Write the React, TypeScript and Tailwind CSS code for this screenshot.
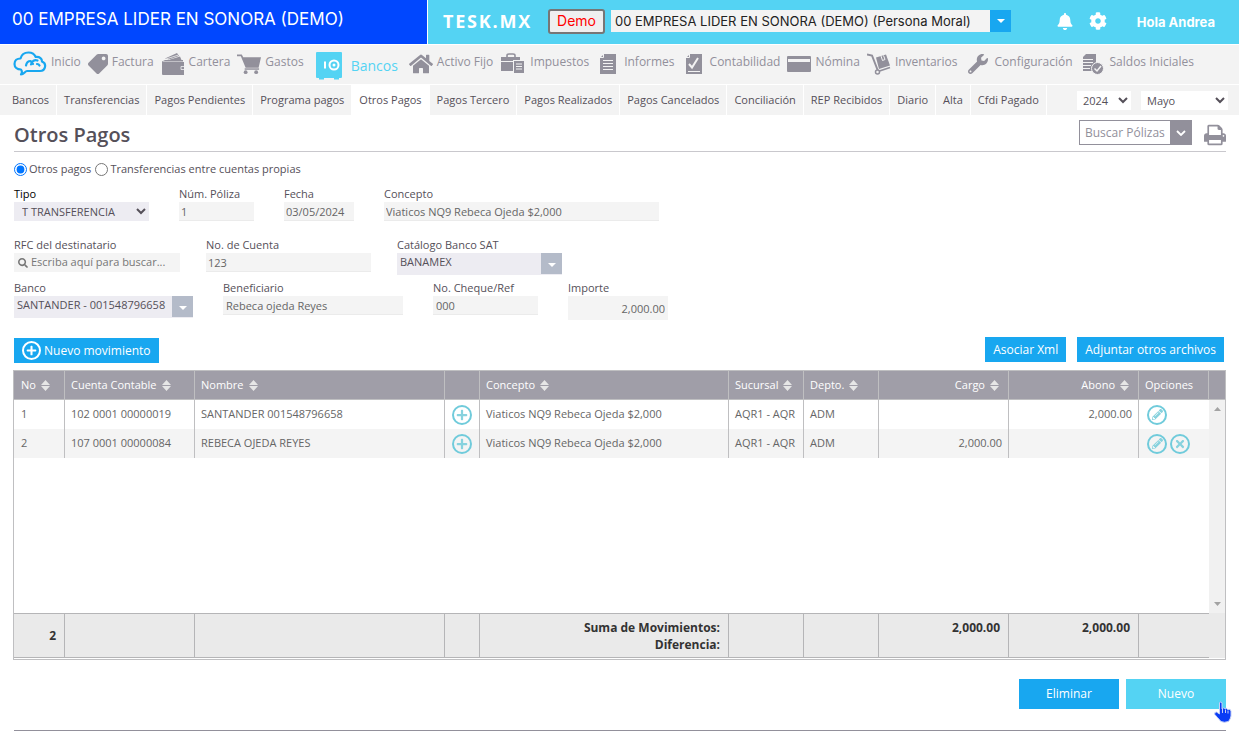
import { ReactNode, useState } from 'react';
import { FaBell, FaCog, FaHome, FaPencilAlt, FaPlus, FaSearch, FaTag, FaTimes, FaWrench } from 'react-icons/fa';

type IconProps = { className?: string };

function CloudIcon() {
  return (
    <svg width="34" height="26" viewBox="0 0 34 26" fill="none" stroke="#18a7f0" strokeWidth="2.2" strokeLinecap="round" strokeLinejoin="round">
      <path d="M8 18.500C4 18.500 1.500 16 1.500 13C1.500 9.500 4 7.500 7.500 7.500C8.500 3.500 12 1.500 15.500 1.500C19 1.500 21.500 3 22.700 6C27 5.500 29 8 29 10.500C31.500 11.500 32.500 13.500 32 16C31.500 18.500 29.500 20 27 20H14C12 20 11 23.500 8 23.500C9.500 21.500 9 20 8 18.500Z" />
      <path d="M13 14.500C13.500 12 15 10 17.500 10L20 13M18 13.500C19 10 21.500 8.500 24.500 9.500M24 13C25.500 13 26 13.500 26.500 14.500" />
    </svg>
  );
}

function WalletIcon() {
  return (
    <svg width="24" height="24" viewBox="0 0 24 24" fill="#92909b">
      <path d="M4 6.500L16 1L18 4L8 7.500ZM9 7.500L19 4.500L20.500 8H9Z" />
      <path d="M1 9.500L4 8H22V9.500H2V10H23V23H2Q1 23 1 22Z" />
      <path d="M5 7L17 3.200" stroke="#f3f3f3" strokeWidth="0.8" />
      <path d="M24 14.500H20V17.500H24" fill="none" stroke="#f3f3f3" strokeWidth="0.8" />
    </svg>
  );
}

function CartIcon() {
  return (
    <svg width="25" height="24" viewBox="0 0 25 24" fill="#92909b">
      <path d="M0 2h5l1.500 3H25l-2.500 11H9L4 4H0z" />
      <path d="M8 16.500h15V18H8z" />
      <circle cx="9" cy="20.500" r="2" />
      <circle cx="20" cy="20.500" r="2" />
    </svg>
  );
}

function SafeIcon() {
  return (
    <svg width="26" height="28" viewBox="0 0 26 28">
      <path d="M1 0H25Q26 0 26 1V25Q26 26 25 26H23V27.500H18V26H8V27.500H3V26H1Q0 26 0 25V1Q0 0 1 0Z" fill="#54d3f3" />
      <path d="M9 9.500V16.500" stroke="#fff" strokeWidth="2" />
      <circle cx="18" cy="13" r="4.500" fill="none" stroke="#fff" strokeWidth="2" />
      <circle cx="18" cy="13" r="1.500" fill="#fff" />
    </svg>
  );
}

function BriefcaseIcon() {
  return (
    <svg width="24" height="22" viewBox="0 0 24 22" fill="#92909b">
      <path d="M6 4V2.500Q6 1 8 1H12Q14 1 14 2.500V4" fill="none" stroke="#92909b" strokeWidth="1.600" />
      <path d="M0 4H19V7H12V18H0Z" />
      <path d="M0 8.500H12" stroke="#f3f3f3" />
      <path d="M13 8H23V20H13Z" />
      <path d="M15 11H21M15 13.500H21M15 16H21" stroke="#f3f3f3" />
    </svg>
  );
}

function ReportIcon() {
  return (
    <svg width="18" height="22" viewBox="0 0 18 22">
      <path d="M5 1H17V21H1V5Z" fill="#92909b" />
      <path d="M1 4.500H4.500V1" fill="none" stroke="#f3f3f3" />
      <path d="M4 7.500H14M4 10.500H14M4 13.500H14M4 16.500H14" stroke="#f3f3f3" strokeWidth="1.200" />
    </svg>
  );
}

function CheckReportIcon() {
  return (
    <svg width="18" height="22" viewBox="0 0 18 22">
      <path d="M5 1H17V21H1V5Z" fill="#92909b" />
      <path d="M1 4.500H4.500V1" fill="none" stroke="#f3f3f3" />
      <path d="M4 11L7 14.500L13 5" fill="none" stroke="#f3f3f3" strokeWidth="2" />
      <path d="M3 18.500H15" stroke="#f3f3f3" />
    </svg>
  );
}

function CardIcon() {
  return (
    <svg width="24" height="16" viewBox="0 0 24 16">
      <rect width="24" height="16" rx="1" fill="#92909b" />
      <path d="M1 4.500H23" stroke="#f3f3f3" strokeWidth="3" />
    </svg>
  );
}

function TrolleyIcon() {
  return (
    <svg width="24" height="22" viewBox="0 0 24 22">
      <path d="M0 1.500L5 2.500L11 18" fill="none" stroke="#92909b" strokeWidth="2" />
      <path d="M9 4.500L19 1.500L23 12.500L12 16Z" fill="#92909b" />
      <path d="M14 3L15.500 7.500L18 6.500L16.500 2.500" fill="none" stroke="#f3f3f3" />
      <path d="M11 18.500L23 14.500" stroke="#92909b" strokeWidth="1.800" />
      <circle cx="10.500" cy="19" r="2" fill="#f3f3f3" stroke="#92909b" strokeWidth="1.500" />
    </svg>
  );
}

function BalanceIcon() {
  return (
    <svg width="22" height="22" viewBox="0 0 22 22">
      <path d="M4 1H14V18H1V4Z" fill="#92909b" />
      <path d="M1 6.500H11M1 9.500H11M1 12.500H9M1 15.500H8" stroke="#f3f3f3" />
      <circle cx="15.500" cy="15.500" r="6" fill="#92909b" stroke="#f3f3f3" />
      <path d="M12.500 15.500L15 18L19 13" fill="none" stroke="#f3f3f3" strokeWidth="1.500" />
    </svg>
  );
}

function PrintIcon() {
  return (
    <svg width="22" height="22" viewBox="64 64 1664 1664" fill="#92909b">
      <path d="M448 1536h896v-256h-896v256zm0-640h896v-384h-160q-40 0-68-28t-28-68v-160h-640v640zm1152 64q0-26-19-45t-45-19-45 19-19 45 19 45 45 19 45-19 19-45zm128 0v416q0 13-9.500 22.500t-22.500 9.500h-224v160q0 40-28 68t-68 28h-960q-40 0-68-28t-28-68v-160h-224q-13 0-22.500-9.500t-9.500-22.500v-416q0-79 56.500-135.500t135.500-56.500h64v-544q0-40 28-68t68-28h672q40 0 88 20t76 48l152 152q28 28 48 76t20 88v256h64q79 0 135.500 56.500t56.500 135.500z" />
    </svg>
  );
}

function HandCursor({ className }: IconProps) {
  return (
    <svg className={className} width="18" height="22" viewBox="0 0 18 22">
      <path
        d="M5.500 1.500Q7.500 0 8 2V8Q9 6 11 7.500Q12.500 6.500 13.500 8.500Q16.500 7.500 17 10V15Q16.500 18 14.500 20.500Q10 22 7 20.500Q3 16 .8 13.500Q0 11 2.500 11L5.500 13Z"
        fill="#0a3cf5"
        stroke="#c5cff5"
      />
      <path d="M8.500 8V12M11.500 8.500V12M14 9.500V12.500" stroke="#c5cff5" />
    </svg>
  );
}

function SortIcon() {
  return (
    <svg className="ml-[5px] inline-block align-middle" width="9" height="11" viewBox="0 0 9 11" fill="#e6e6e6">
      <path d="M4.500 0L9 5H0ZM0 6H9L4.500 11Z" />
    </svg>
  );
}

function DownArrow() {
  return (
    <svg width="8" height="4" viewBox="0 0 8 4" fill="#fff">
      <path d="M0 0H8L4 4Z" />
    </svg>
  );
}

const menu = [
  { label: 'Inicio', icon: <CloudIcon />, box: 'w-[34px]' },
  { label: 'Factura', icon: <FaTag className="size-5 -scale-x-100" />, box: 'w-5' },
  { label: 'Cartera', icon: <WalletIcon />, box: 'w-6' },
  { label: 'Gastos', icon: <CartIcon />, box: 'w-6' },
  { label: 'Bancos', icon: <SafeIcon />, box: 'w-9', active: true },
  { label: 'Activo Fijo', icon: <FaHome className="ml-1 size-6" />, box: 'w-7' },
  { label: 'Impuestos', icon: <BriefcaseIcon />, box: 'w-[26px]' },
  { label: 'Informes', icon: <ReportIcon />, box: 'w-6' },
  { label: 'Contabilidad', icon: <CheckReportIcon />, box: 'w-6' },
  { label: 'Nómina', icon: <CardIcon />, box: 'w-6' },
  { label: 'Inventarios', icon: <TrolleyIcon />, box: 'w-6' },
  { label: 'Configuración', icon: <FaWrench className="size-5" />, box: 'w-[26px]' },
  { label: 'Saldos Iniciales', icon: <BalanceIcon />, box: 'w-[26px]' },
];

const tabs = [
  'Bancos',
  'Transferencias',
  'Pagos Pendientes',
  'Programa pagos',
  'Otros Pagos',
  'Pagos Tercero',
  'Pagos Realizados',
  'Pagos Cancelados',
  'Conciliación',
  'REP Recibidos',
  'Diario',
  'Alta',
  'Cfdi Pagado',
];

const movements = [
  { no: 1, account: '102 0001 00000019', name: 'SANTANDER 001548796658', cargo: '', abono: '2,000.00', removable: false },
  { no: 2, account: '107 0001 00000084', name: 'REBECA OJEDA REYES', cargo: '2,000.00', abono: '', removable: true },
];

function Field({ id, label, width, dark, children }: { id: string; label: string; width: string; dark?: boolean; children: ReactNode }) {
  return (
    <div className={`flex flex-col ${width}`}>
      <label htmlFor={id} className={dark ? 'leading-4 text-black' : 'leading-4'}>
        {label}
      </label>
      {children}
    </div>
  );
}

function TextField({ id, value, pad = 'px-0.5' }: { id: string; value: string; pad?: string }) {
  return <input id={id} defaultValue={value} className={`h-[19px] w-full border-b border-[#ebebeb] bg-[#f4f4f4] text-[#666] outline-none ${pad}`} />;
}

function Combo({ id, value }: { id: string; value: string }) {
  return (
    <div className="flex h-[22px] bg-[#edecf2]">
      <select id={id} className="h-[19px] min-w-0 flex-1 appearance-none px-[3px] outline-none">
        <option>{value}</option>
      </select>
      <span className="flex h-[21px] w-[21px] items-center justify-center bg-[#b4bbc9] pt-0.5">
        <DownArrow />
      </span>
    </div>
  );
}

function RoundButton({ label, children }: { label: string; children: ReactNode }) {
  return (
    <button aria-label={label} className="flex size-5 items-center justify-center rounded-full border-2 border-[#70cbdb] text-[#87d2de]">
      {children}
    </button>
  );
}

export default function App() {
  const [kind, setKind] = useState('otros');

  return (
    <div className="min-h-screen bg-white font-['Open_Sans',sans-serif] text-[11px] text-[#555059]">
      <header className="flex h-[45px] gap-px border-b border-white font-['Inter',sans-serif]">
        <div className="w-[427px] shrink-0 bg-[#0047ff] pl-3 text-[17px] leading-[39px] text-white">00 EMPRESA LIDER EN SONORA (DEMO)</div>
        <div className="flex flex-1 items-center bg-[#54d3f3] pr-6 pb-0.5 pl-[15px]">
          <span className="w-[105px] font-['Open_Sans',sans-serif] text-[18px] font-bold tracking-widest text-white">TESK.MX</span>
          <button className="h-[25px] w-[57px] rounded-[3px] border-2 border-[#767676] bg-[#efefef] text-[14px] leading-5 text-[#ff0000]">Demo</button>
          <div className="ml-1.5 flex h-[22px] w-[400px] bg-[#f3f3f3] text-black">
            <select aria-label="Empresa" className="min-w-0 flex-1 appearance-none px-1 pt-0.5 text-[13px] text-[#222] outline-none">
              <option>00 EMPRESA LIDER EN SONORA (DEMO) (Persona Moral)</option>
            </select>
            <span className="flex w-[21px] items-center justify-center bg-[#18a7f0]">
              <DownArrow />
            </span>
          </div>
          <div className="ml-auto flex items-center gap-4 text-white">
            <button aria-label="Notificaciones">
              <FaBell className="h-[17px] w-4" />
            </button>
            <button aria-label="Ajustes">
              <FaCog className="size-[18px]" />
            </button>
            <span className="pt-1 pl-3.5 text-[13px] font-bold">Hola Andrea</span>
          </div>
        </div>
      </header>

      <nav className="flex h-10 gap-[7px] border-b border-white bg-[#f3f3f3] pl-[13px] text-[12px] font-medium text-[#92909b]">
        {menu.map((item) => (
          <a
            key={item.label}
            href="#"
            className={item.active ? 'flex items-center gap-1 pt-0.5 text-[14px] whitespace-nowrap text-[#54d3f3]' : 'flex items-center gap-1 pb-0.5 whitespace-nowrap'}
          >
            <span className={`flex shrink-0 justify-center ${item.box}`}>{item.icon}</span>
            <span className={item.active ? '' : 'pb-1'}>{item.label}</span>
          </a>
        ))}
      </nav>

      <div className="flex h-[30px] items-center bg-[#f3f3f3] pl-[5px] font-medium">
        {tabs.map((tab) => (
          <a
            key={tab}
            href="#"
            className={`flex h-full items-center border-r border-white px-[7px] whitespace-nowrap ${tab === 'Otros Pagos' ? 'bg-white' : ''}`}
          >
            {tab}
          </a>
        ))}
        <div className="mr-[11px] ml-auto flex gap-2.5 font-normal">
          <select aria-label="Año" className="h-[19px] w-[54px] bg-white pl-0.5 outline-none">
            <option>2024</option>
          </select>
          <select aria-label="Mes" className="h-[19px] w-[87px] bg-white pl-0.5 outline-none">
            <option>Mayo</option>
          </select>
        </div>
      </div>

      <main className="px-[13px]">
        <div className="ml-px flex h-[37px] items-start justify-between border-b border-[#c9c8cd]">
          <h1 className="pt-1 text-[20px] leading-8 font-semibold">Otros Pagos</h1>
          <div className="flex gap-3 pt-[5px] text-[#92909b]">
            <div className="flex h-[25px] w-[113px] border border-[#92909b] text-[12px]">
              <input aria-label="Buscar Pólizas" placeholder="Buscar Pólizas" className="min-w-0 flex-1 pl-[5px] outline-none placeholder:text-[#92909b]" />
              <button aria-label="Desplegar" className="flex w-[21px] items-center justify-center bg-[#92909b]">
                <svg width="10" height="6" viewBox="0 0 10 6" fill="none" stroke="#fff" strokeWidth="1.800">
                  <path d="M1 1L5 5L9 1" />
                </svg>
              </button>
            </div>
            <button aria-label="Imprimir" className="pt-1">
              <PrintIcon />
            </button>
          </div>
        </div>

        <form className="pl-px">
          <div className="flex h-[34px] items-center gap-1">
            <label className="flex items-center gap-0.5">
              <input type="radio" name="kind" checked={kind === 'otros'} onChange={() => setKind('otros')} className="size-[13px]" />
              Otros pagos
            </label>
            <label className="flex items-center gap-0.5">
              <input type="radio" name="kind" checked={kind === 'transferencias'} onChange={() => setKind('transferencias')} className="size-[13px]" />
              Transferencias entre cuentas propias
            </label>
          </div>

          <div className="flex gap-[30px]">
            <Field id="tipo" label="Tipo" width="w-[135px]" dark>
              <select id="tipo" className="h-[19px] bg-[#edecf2] pl-1 outline-none">
                <option>T TRANSFERENCIA</option>
              </select>
            </Field>
            <Field id="poliza" label="Núm. Póliza" width="w-[75px]">
              <TextField id="poliza" value="1" />
            </Field>
            <Field id="fecha" label="Fecha" width="w-[70px]">
              <TextField id="fecha" value="03/05/2024" />
            </Field>
            <Field id="concepto" label="Concepto" width="w-[275px]">
              <TextField id="concepto" value="Viaticos NQ9 Rebeca Ojeda $2,000" />
            </Field>
          </div>

          <div className="mt-4 flex gap-[26px]">
            <Field id="rfc" label="RFC del destinatario" width="w-[166px]">
              <div className="flex h-[19px] items-center gap-[3px] bg-[#f4f4f4] pl-1 text-[#777]">
                <FaSearch className="size-2.5 shrink-0" />
                <input id="rfc" placeholder="Escriba aquí para buscar..." className="min-w-0 flex-1 outline-none placeholder:text-[#777]" />
              </div>
            </Field>
            <Field id="cuenta" label="No. de Cuenta" width="w-[165px]">
              <TextField id="cuenta" value="123" />
            </Field>
            <Field id="catalogo" label="Catálogo Banco SAT" width="w-[165px]">
              <Combo id="catalogo" value="BANAMEX" />
            </Field>
          </div>

          <div className="mt-[5px] flex gap-[30px]">
            <Field id="banco" label="Banco" width="w-[179px]">
              <Combo id="banco" value="SANTANDER - 001548796658" />
            </Field>
            <Field id="beneficiario" label="Beneficiario" width="w-[180px]">
              <TextField id="beneficiario" value="Rebeca ojeda Reyes" pad="px-[3px]" />
            </Field>
            <Field id="cheque" label="No. Cheque/Ref" width="w-[105px]">
              <TextField id="cheque" value="000" pad="px-[3px]" />
            </Field>
            <Field id="importe" label="Importe" width="w-[100px]">
              <input id="importe" defaultValue="2,000.00" className="h-6 w-full bg-[#f4f4f4] px-[3px] text-right text-[#666] outline-none" />
            </Field>
          </div>
        </form>

        <div className="mt-[17px] flex items-start justify-between pr-0.5 pl-px text-[12px] font-medium text-white">
          <button className="mt-px flex h-[25px] items-center gap-[3px] bg-[#18a7f0] px-2">
            <span className="flex size-[19px] items-center justify-center rounded-full border-2 border-white">
              <FaPlus className="size-[11px]" />
            </span>
            Nuevo movimiento
          </button>
          <div className="flex gap-[11px]">
            <button className="h-[25px] bg-[#18a7f0] px-2">Asociar Xml</button>
            <button className="h-[25px] bg-[#18a7f0] px-2">Adjuntar otros archivos</button>
          </div>
        </div>

        <div className="mt-[7px] border border-[#bfbfc1] pb-px">
          <table className="w-full table-fixed border-separate border-spacing-0">
            <colgroup>
              <col className="w-[51px]" />
              <col className="w-[130px]" />
              <col className="w-[250px]" />
              <col className="w-[35px]" />
              <col />
              <col className="w-[75px]" />
              <col className="w-[75px]" />
              <col className="w-[130px]" />
              <col className="w-[130px]" />
              <col className="w-[70px]" />
              <col className="w-4" />
            </colgroup>
            <thead className="bg-[#a09ea8] text-left text-white [&_th]:h-[29px] [&_th]:border-b [&_th]:border-[#bfbfc1] [&_th]:px-1.5 [&_th]:font-medium [&_th:first-child]:pl-[7px] [&_th:not(:last-child)]:border-r">
              <tr>
                <th>No<SortIcon /></th>
                <th>Cuenta Contable<SortIcon /></th>
                <th>Nombre<SortIcon /></th>
                <th></th>
                <th>Concepto<SortIcon /></th>
                <th>Sucursal<SortIcon /></th>
                <th>Depto.<SortIcon /></th>
                <th><div className="pr-[3px] text-right">Cargo<SortIcon /></div></th>
                <th><div className="pr-[3px] text-right">Abono<SortIcon /></div></th>
                <th>Opciones</th>
                <th></th>
              </tr>
            </thead>
            <tbody className="text-[#666]">
              {movements.map((row, i) => (
                <tr
                  key={row.no}
                  className="even:bg-[#f4f4f4] [&>td]:h-[29px] [&>td]:border-[#bfbfc1] [&>td]:px-1.5 [&>td:first-child]:pl-[7px] [&>td:not(:nth-child(n+10))]:border-r"
                >
                  <td>{row.no}</td>
                  <td>{row.account}</td>
                  <td>{row.name}</td>
                  <td>
                    <div className="flex justify-center">
                      <RoundButton label="Agregar">
                        <FaPlus className="size-3" />
                      </RoundButton>
                    </div>
                  </td>
                  <td>Viaticos NQ9 Rebeca Ojeda $2,000</td>
                  <td className="whitespace-nowrap">AQR1 - AQR</td>
                  <td>ADM</td>
                  <td className="text-right">{row.cargo}</td>
                  <td className="text-right">{row.abono}</td>
                  <td>
                    <div className="flex gap-[3px] pl-0.5">
                      <RoundButton label="Editar">
                        <FaPencilAlt className="size-[11px]" />
                      </RoundButton>
                      {row.removable && (
                        <RoundButton label="Quitar">
                          <FaTimes className="size-3" />
                        </RoundButton>
                      )}
                    </div>
                  </td>
                  {i === 0 && (
                    <td rowSpan={3} className="bg-[#f1f1f1] align-top">
                      <div className="flex h-[213px] flex-col items-center justify-between py-[7px]">
                        <svg width="7" height="4" viewBox="0 0 7 4" fill="#a3a3a3" className="-mx-1">
                          <path d="M0 4H7L3.500 0Z" />
                        </svg>
                        <svg width="7" height="4" viewBox="0 0 7 4" fill="#a3a3a3" className="-mx-1">
                          <path d="M0 0H7L3.500 4Z" />
                        </svg>
                      </div>
                    </td>
                  )}
                </tr>
              ))}
              <tr>
                <td colSpan={10} className="h-[155px]"></td>
              </tr>
            </tbody>
            <tfoot className="bg-[#eaeaea] text-right text-[12px] leading-[17px] font-bold text-[#333] [&_td]:h-[45px] [&_td]:border-[#b5b5b7] [&_td]:px-2 [&_td:not(:last-child)]:border-y [&_td:not(:nth-child(n+10))]:border-r">
              <tr>
                <td>2</td>
                <td></td>
                <td></td>
                <td></td>
                <td>
                  Suma de Movimientos:
                  <br />
                  Diferencia:
                </td>
                <td></td>
                <td></td>
                <td className="pt-[5px] align-top">2,000.00</td>
                <td className="pt-[5px] align-top">2,000.00</td>
                <td></td>
                <td></td>
              </tr>
            </tfoot>
          </table>
        </div>

        <div className="ml-px flex justify-end gap-[7px] border-b border-[#92909b] pt-[19px] pb-[21px] text-[12px] font-medium text-white">
          <button className="h-[30px] w-[100px] bg-[#18a7f0]">Eliminar</button>
          <div className="relative">
            <button className="h-[30px] w-[100px] bg-[#54d3f3]">Nuevo</button>
            <HandCursor className="absolute -right-1.5 -bottom-3.5" />
          </div>
        </div>
      </main>
    </div>
  );
}
